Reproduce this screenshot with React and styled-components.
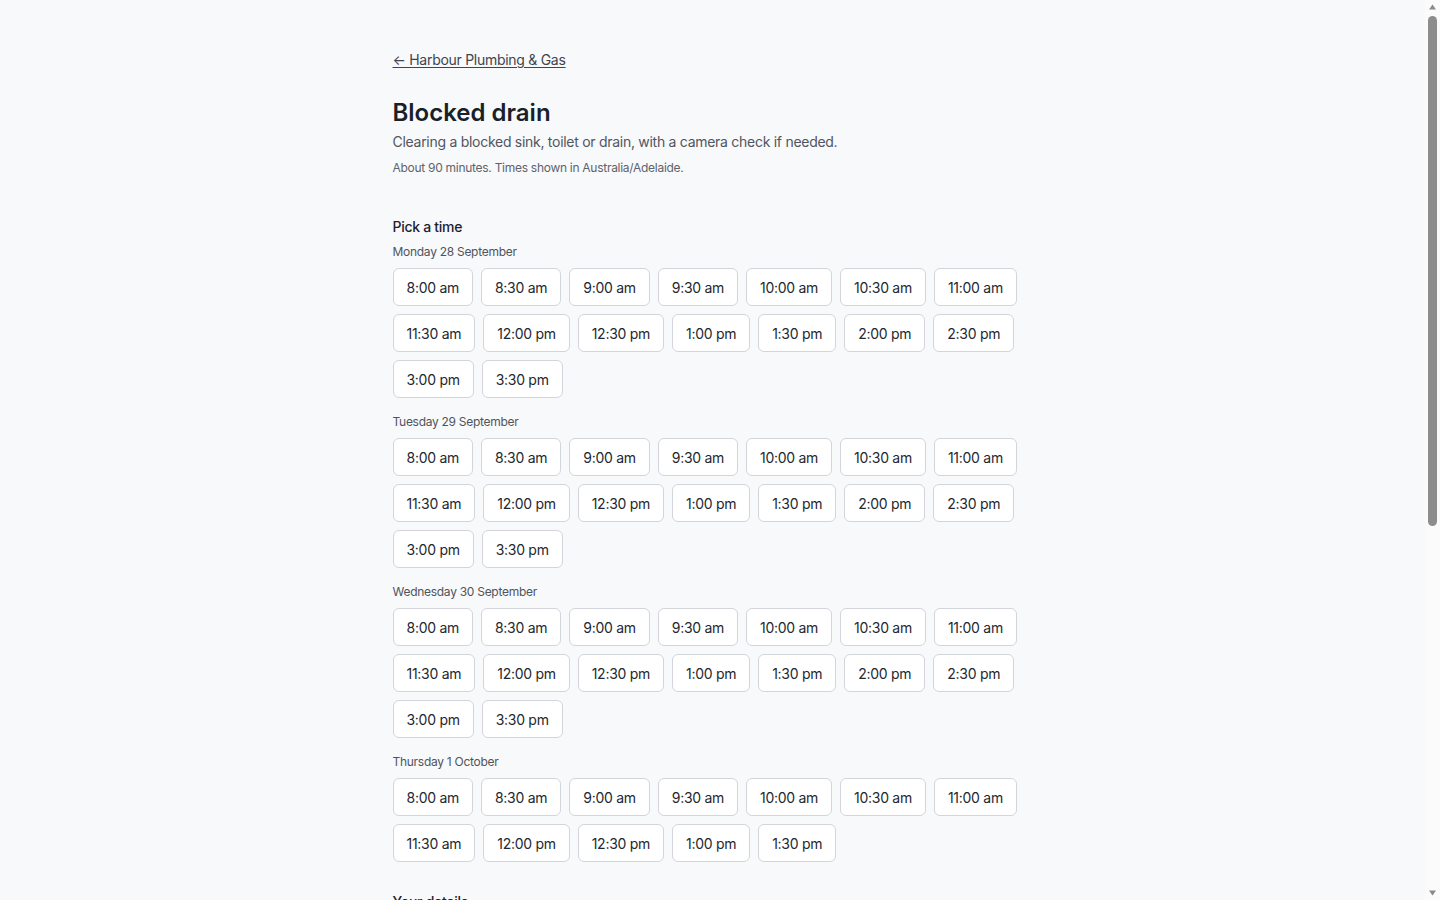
import React from "react";
import styled, { createGlobalStyle } from "styled-components";

const GlobalStyle = createGlobalStyle`
  html, body { margin: 0; padding: 0; background: #f8f9fb; }
  body {
    font-family: Inter, "Noto Sans", "Liberation Sans", sans-serif;
    color: #1c2230;
    letter-spacing: -0.28px;
    -webkit-font-smoothing: antialiased;
  }
  * { box-sizing: border-box; }
`;

const Shell = styled.div`
  padding-right: 15px;
`;

const Page = styled.main`
  max-width: 640px;
  margin: 0 auto;
  padding: 49px 0 80px;
`;

const BackLink = styled.a`
  display: inline-block;
  font-size: 14px;
  line-height: 20px;
  color: #3f4450;
  text-decoration: underline;
  text-underline-offset: 2px;
  text-decoration-thickness: 1px;
`;

const Title = styled.h1`
  margin: 28px 0 4px;
  font-size: 24px;
  line-height: 30px;
  font-weight: 600;
  color: #1a1f2a;
  letter-spacing: 0;
`;

const Lead = styled.p`
  margin: 0;
  font-size: 14px;
  line-height: 20px;
  color: #51555e;
`;

const Meta = styled.p`
  margin: 8px 0 0;
  font-size: 12px;
  line-height: 16px;
  color: #5f636b;
`;

const Section = styled.section`
  margin-top: ${(p) => p.$top || 41}px;
`;

const SectionTitle = styled.h2`
  margin: 0 0 7px;
  font-size: 14px;
  line-height: 20px;
  font-weight: 500;
  color: #1c2230;
`;

const Day = styled.div`
  & + & { margin-top: 16px; }
`;

const DayLabel = styled.div`
  font-size: 12px;
  line-height: 16px;
  color: #50545c;
  margin-bottom: 8px;
`;

const Slots = styled.div`
  display: flex;
  flex-wrap: wrap;
  gap: 8px;
`;

const Slot = styled.button`
  height: 38px;
  padding: 0 13px;
  border: 1px solid #d3d5da;
  border-radius: 6px;
  background: #ffffff;
  font-family: inherit;
  font-size: 14px;
  letter-spacing: inherit;
  color: #23272f;
  cursor: pointer;
  &:hover { border-color: #9aa0aa; }
`;

const Form = styled.form`
  display: flex;
  flex-direction: column;
  gap: 16px;
`;

const Field = styled.label`
  display: flex;
  flex-direction: column;
  gap: 6px;
  font-size: 12px;
  color: #50545c;
`;

const Input = styled.input`
  height: 40px;
  padding: 0 12px;
  border: 1px solid #d3d5da;
  border-radius: 6px;
  background: #fff;
  font-family: inherit;
  font-size: 14px;
`;

const TextArea = styled.textarea`
  min-height: 96px;
  padding: 10px 12px;
  border: 1px solid #d3d5da;
  border-radius: 6px;
  background: #fff;
  font-family: inherit;
  font-size: 14px;
  resize: vertical;
`;

const Submit = styled.button`
  align-self: flex-start;
  height: 40px;
  padding: 0 18px;
  border: none;
  border-radius: 6px;
  background: #1a1f2a;
  color: #fff;
  font-family: inherit;
  font-size: 14px;
  font-weight: 500;
`;

/* decorative window scrollbar, drawn over the page edge */
const ScrollRail = styled.div`
  position: fixed;
  top: 0;
  right: 0;
  width: 15px;
  height: 100vh;
  background: #fbfbfb;
  display: flex;
  flex-direction: column;
  align-items: center;
  padding: 3px 0;
`;

const Arrow = styled.svg`
  display: block;
  flex: none;
`;

const Track = styled.div`
  flex: 1;
  width: 100%;
  display: flex;
  justify-content: center;
  padding-top: 5px;
`;

const Thumb = styled.div`
  width: 9px;
  height: 510px;
  border-radius: 5px;
  background: #8d8d8d;
`;

const full = [
  "8:00 am", "8:30 am", "9:00 am", "9:30 am", "10:00 am", "10:30 am", "11:00 am",
  "11:30 am", "12:00 pm", "12:30 pm", "1:00 pm", "1:30 pm", "2:00 pm", "2:30 pm",
  "3:00 pm", "3:30 pm",
];

const days = [
  { label: "Monday 28 September", slots: full },
  { label: "Tuesday 29 September", slots: full },
  { label: "Wednesday 30 September", slots: full },
  { label: "Thursday 1 October", slots: full.slice(0, 12) },
];

export default function App() {
  return (
    <>
      <GlobalStyle />
      <Shell>
        <Page>
          <BackLink href="#">← Harbour Plumbing &amp; Gas</BackLink>
          <Title>Blocked drain</Title>
          <Lead>Clearing a blocked sink, toilet or drain, with a camera check if needed.</Lead>
          <Meta>About 90 minutes. Times shown in Australia/Adelaide.</Meta>

          <Section>
            <SectionTitle>Pick a time</SectionTitle>
            {days.map((d) => (
              <Day key={d.label}>
                <DayLabel>{d.label}</DayLabel>
                <Slots>
                  {d.slots.map((s) => (
                    <Slot key={s} type="button">{s}</Slot>
                  ))}
                </Slots>
              </Day>
            ))}
          </Section>

          <Section $top={30}>
            <SectionTitle>Your details</SectionTitle>
            <Form onSubmit={(e) => e.preventDefault()}>
              <Field>Name<Input type="text" /></Field>
              <Field>Phone<Input type="tel" /></Field>
              <Field>Email<Input type="email" /></Field>
              <Field>Address<Input type="text" /></Field>
              <Field>Anything we should know?<TextArea /></Field>
              <Submit type="submit">Request booking</Submit>
            </Form>
          </Section>
        </Page>
      </Shell>
      <ScrollRail aria-hidden="true">
        <Arrow width="9" height="8" viewBox="0 0 9 8">
          <path d="M4.5 1.5 L8 6.5 H1 Z" fill="#8a8a8a" />
        </Arrow>
        <Track>
          <Thumb />
        </Track>
        <Arrow width="9" height="8" viewBox="0 0 9 8">
          <path d="M1 1.5 H8 L4.5 6.5 Z" fill="#8a8a8a" />
        </Arrow>
      </ScrollRail>
    </>
  );
}
